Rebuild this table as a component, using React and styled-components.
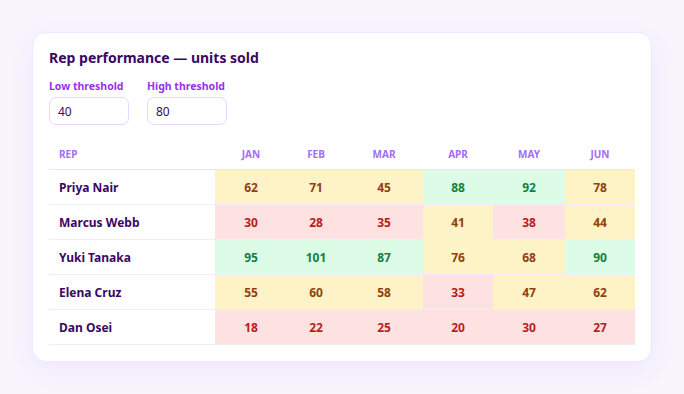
import React from "react";
import styled, { createGlobalStyle } from "styled-components";

const FONT = `"Noto Sans", "Open Sans", sans-serif`;

const Global = createGlobalStyle`
  html, body { margin: 0; padding: 0; }
  body {
    background: #f8f5fd;
    font-family: ${FONT};
    width: 684px;
    height: 394px;
    overflow: hidden;
  }
`;

const Page = styled.div`
  padding: 32px;
  box-sizing: border-box;
`;

const Card = styled.section`
  width: 620px;
  box-sizing: border-box;
  background: #ffffff;
  border: 1px solid #efe7fb;
  border-radius: 14px;
  box-shadow: 0 8px 28px rgba(124, 58, 237, 0.08);
  padding: 16px;
`;

const Title = styled.h2`
  margin: 0 0 13px;
  font-size: 14px;
  font-weight: 700;
  color: #3b0764;
  line-height: 17px;
`;

const Controls = styled.div`
  display: flex;
  gap: 18px;
  margin-bottom: 14px;
`;

const Field = styled.label`
  display: flex;
  flex-direction: column;
  gap: 4px;
`;

const FieldLabel = styled.span`
  font-size: 10.5px;
  font-weight: 700;
  color: #9333ea;
  line-height: 14px;
`;

const Input = styled.input`
  width: 80px;
  height: 28px;
  box-sizing: border-box;
  border: 1px solid #e9d5ff;
  border-radius: 7px;
  padding: 0 8px;
  font-family: ${FONT};
  font-size: 12px;
  color: #3b0764;
  outline: none;
  background: #fff;
`;

const Table = styled.table`
  width: 586px;
  border-collapse: collapse;
  table-layout: fixed;
`;

const Th = styled.th`
  height: 30px;
  padding: 0 10px;
  font-size: 10px;
  font-weight: 700;
  color: #a26cf7;
  text-align: ${(p) => (p.$left ? "left" : "center")};
  border-bottom: 1px solid #ece6f8;
  vertical-align: middle;
`;

const Row = styled.tr`
  border-bottom: 1px solid #f1ecfa;
`;

const NameCell = styled.td`
  height: 34px;
  padding: 0 10px;
  font-size: 12px;
  font-weight: 700;
  color: #3b0764;
  background: #fff;
`;

const tones = {
  low: { bg: "#fee2e2", fg: "#b91c1c" },
  mid: { bg: "#fef3c7", fg: "#92400e" },
  high: { bg: "#dcfce7", fg: "#15803d" },
};

const ValueCell = styled.td`
  height: 34px;
  padding: 0;
  text-align: center;
  font-size: 12px;
  font-weight: 700;
  background: ${(p) => tones[p.$tone].bg};
  color: ${(p) => tones[p.$tone].fg};
`;

const months = ["JAN", "FEB", "MAR", "APR", "MAY", "JUN"];
const widths = [166, 72, 58, 78, 70, 72, 70];

const reps = [
  ["Priya Nair", [62, 71, 45, 88, 92, 78]],
  ["Marcus Webb", [30, 28, 35, 41, 38, 44]],
  ["Yuki Tanaka", [95, 101, 87, 76, 68, 90]],
  ["Elena Cruz", [55, 60, 58, 33, 47, 62]],
  ["Dan Osei", [18, 22, 25, 20, 30, 27]],
];

const LOW = 40;
const HIGH = 80;
const toneOf = (v) => (v < LOW ? "low" : v > HIGH ? "high" : "mid");

export default function App() {
  return (
    <>
      <Global />
      <Page>
        <Card>
          <Title>Rep performance — units sold</Title>
          <Controls>
            <Field>
              <FieldLabel>Low threshold</FieldLabel>
              <Input defaultValue={LOW} />
            </Field>
            <Field>
              <FieldLabel>High threshold</FieldLabel>
              <Input defaultValue={HIGH} />
            </Field>
          </Controls>
          <Table>
            <colgroup>
              {widths.map((w, i) => (
                <col key={i} style={{ width: w }} />
              ))}
            </colgroup>
            <thead>
              <tr>
                <Th $left>REP</Th>
                {months.map((m) => (
                  <Th key={m}>{m}</Th>
                ))}
              </tr>
            </thead>
            <tbody>
              {reps.map(([name, vals]) => (
                <Row key={name}>
                  <NameCell>{name}</NameCell>
                  {vals.map((v, i) => (
                    <ValueCell key={i} $tone={toneOf(v)}>
                      {v}
                    </ValueCell>
                  ))}
                </Row>
              ))}
            </tbody>
          </Table>
        </Card>
      </Page>
    </>
  );
}
